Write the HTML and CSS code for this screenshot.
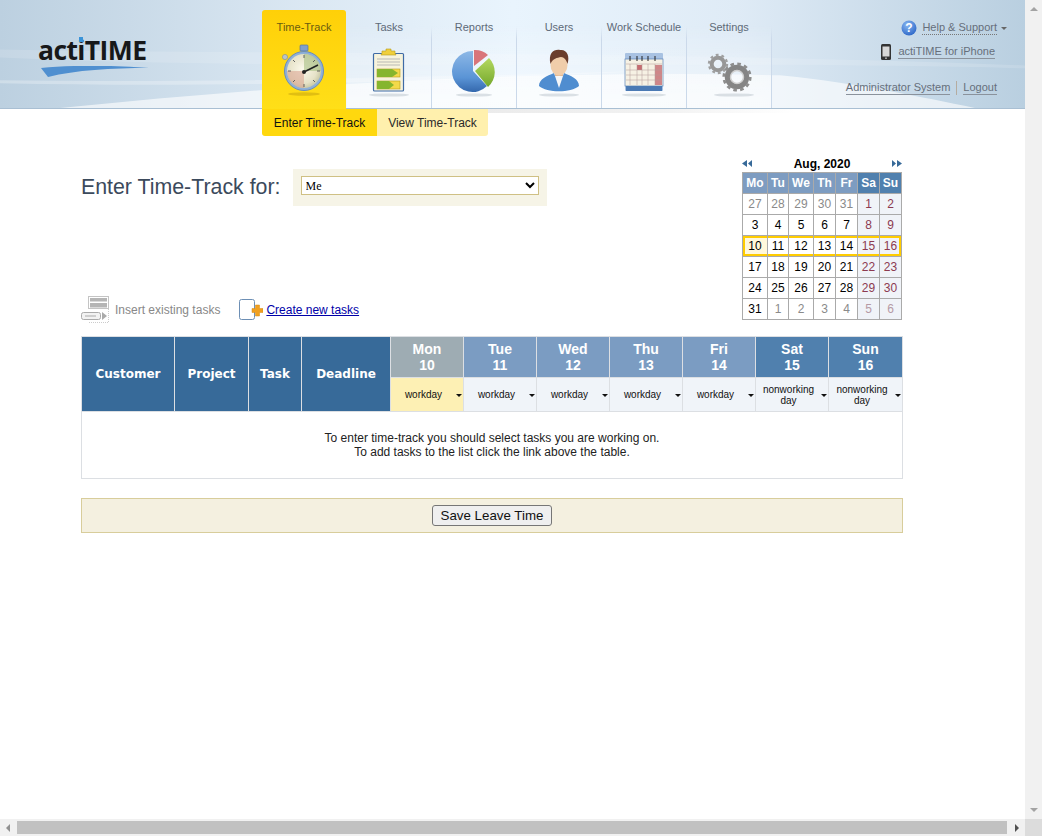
FILE: index.html
```html
<!DOCTYPE html>
<html lang="en">
<head>
<meta charset="utf-8">
<title>actiTIME - Enter Time-Track</title>
<link rel="stylesheet" href="styles.css">
</head>
<body>
<div class="page">
  <header class="header">
    <svg class="header-bg" viewBox="0 0 1025 109" preserveAspectRatio="none" aria-hidden="true">
      <defs>
        <linearGradient id="sky" x1="0" x2="1" y1="0" y2="0">
          <stop offset="0" stop-color="#bcd0e0"/>
          <stop offset=".3" stop-color="#dbe8f3"/>
          <stop offset=".5" stop-color="#e9f4fd"/>
          <stop offset=".72" stop-color="#dfebf6"/>
          <stop offset="1" stop-color="#b9cfe0"/>
        </linearGradient>
      </defs>
      <rect width="1025" height="109" fill="url(#sky)"/>
      <path d="M0 50 C250 55 600 50 1025 66 L1025 69 C700 60 300 72 0 58Z" fill="#fff" opacity=".14"/>
      <path d="M0 81 C200 84 400 78 640 72 C400 84 200 88 0 84Z" fill="#fff" opacity=".28"/>
      <path d="M60 109 C300 85 520 70 780 76 C860 84 920 98 975 109Z" fill="#fff" opacity=".62"/>
    </svg>
    <div class="logo">
      <span class="logo-text">act<span class="logo-i">i</span>TIME</span>
      <svg class="logo-swoosh" viewBox="0 0 108 12" aria-hidden="true"><path d="M0 2 C30 -1 70 -1 108 2 C70 2 35 4 7 11Z" fill="#4f8fd0"/></svg>
    </div>
    <nav class="nav">
      <div class="tab tab-active">
        <span class="tab-label">Time-Track</span>
        <svg class="tab-icon" viewBox="0 0 56 56" aria-hidden="true">
          <defs><radialGradient id="face" cx=".45" cy=".45" r=".6"><stop offset="0" stop-color="#fbf8ea"/><stop offset=".7" stop-color="#e6e2c8"/><stop offset="1" stop-color="#c4c4a0"/></radialGradient></defs>
          <ellipse cx="28" cy="52" rx="16" ry="1.8" fill="#c9a510" opacity=".55"/>
          <rect x="24" y="3" width="8" height="6" rx="1" fill="#7f9fcb" stroke="#56759f" stroke-width=".7"/>
          <circle cx="9" cy="15" r="2.6" fill="#b9c3cc" stroke="#7f8b96" stroke-width=".6"/>
          <circle cx="28" cy="29" r="19.5" fill="#8fb0d8" stroke="#6b8db8"/>
          <circle cx="28" cy="29" r="17" fill="url(#face)"/>
          <path d="M28 12 A17 17 0 0 1 45 29 L28 29Z" fill="#a8bf85" opacity=".6"/>
          <path d="M28 46 A17 17 0 0 1 11 29 L28 29Z" fill="#d9a08e" opacity=".55"/>
          <path d="M28 13v3M28 42v3M12 29h3M41 29h3M17 18l2 2M39 18l-2 2M17 40l2-2M39 40l-2-2" stroke="#555" stroke-width=".9"/>
          <path d="M28 30 L42 23" stroke="#222" stroke-width="1.6"/>
          <circle cx="28" cy="30" r="2" fill="#222"/>
        </svg>
      </div>
      <div class="tab">
        <span class="tab-label">Tasks</span>
        <svg class="tab-icon" viewBox="0 0 56 56" aria-hidden="true">
          <ellipse cx="28" cy="53" rx="20" ry="1.6" fill="#b9c3cc" opacity=".5"/>
          <rect x="12.5" y="11.5" width="30" height="37.5" rx="1" fill="#f7f3dc" stroke="#3f6ba6" stroke-width="1.2"/>
          <path d="M21 11 V9 H25 V7 H30 V9 H34 V11 L35 13 H20Z" fill="#f0cf3c" stroke="#b79a1c" stroke-width=".6"/>
          <path d="M16 17h23M16 20h23M16 23h23" stroke="#aaa" stroke-width=".8"/>
          <rect x="16" y="27" width="23" height="8" fill="#f3d94a" stroke="#b79a1c" stroke-width=".6"/>
          <path d="M16 27 H31 L37 31 L31 35 H16Z" fill="#86b52e"/>
          <rect x="16" y="39" width="23" height="8" fill="#f3d94a" stroke="#b79a1c" stroke-width=".6"/>
          <path d="M16 39 H28 L33 43 L28 47 H16Z" fill="#86b52e"/>
        </svg>
      </div>
      <div class="tab">
        <span class="tab-label">Reports</span>
        <svg class="tab-icon" viewBox="0 0 56 56" aria-hidden="true">
          <defs>
            <linearGradient id="pieblue" x1="0" x2="0" y1="0" y2="1"><stop offset="0" stop-color="#8db8e6"/><stop offset=".65" stop-color="#5a94d6"/><stop offset="1" stop-color="#3468ad"/></linearGradient>
            <linearGradient id="piegreen" x1="0" x2="0" y1="0" y2="1"><stop offset="0" stop-color="#b4d860"/><stop offset="1" stop-color="#74a82c"/></linearGradient>
          </defs>
          <ellipse cx="28" cy="53" rx="18" ry="1.6" fill="#b9c3cc" opacity=".5"/>
          <path d="M27 29 V9 A20.5 20.5 0 1 0 41 44 Z" fill="url(#pieblue)"/>
          <path d="M28 24 V8 A19 19 0 0 1 42 13 Z" fill="#d9757a"/>
          <path d="M29 29 L43 16 A20 20 0 0 1 42 45 Z" fill="url(#piegreen)"/>
        </svg>
      </div>
      <div class="tab">
        <span class="tab-label">Users</span>
        <svg class="tab-icon" viewBox="0 0 56 56" aria-hidden="true">
          <ellipse cx="28" cy="53" rx="20" ry="1.6" fill="#b9c3cc" opacity=".5"/>
          <path d="M8 44 C8 37 16 34 23 31 L28 38 L33 31 C40 34 48 37 48 44 C40 51 16 51 8 44Z" fill="#4f8dd0"/>
          <path d="M23 31 L28 46 L33 31 L28 35Z" fill="#f4f6f8"/>
          <rect x="24" y="26" width="8" height="8" fill="#e0b896"/>
          <ellipse cx="28" cy="23" rx="8.5" ry="10.5" fill="#f0cdaa"/>
          <path d="M19.5 22 C17 11 23 7 29 8 C36 7 39 14 36.5 22 C35.5 18 33 15 30 15 C26 16 22 16 19.5 22Z" fill="#6a3d2c"/>
        </svg>
      </div>
      <div class="tab">
        <span class="tab-label">Work Schedule</span>
        <svg class="tab-icon" viewBox="0 0 56 56" aria-hidden="true">
          <ellipse cx="28" cy="53" rx="22" ry="1.6" fill="#b9c3cc" opacity=".5"/>
          <rect x="9" y="11" width="38" height="38" rx="1" fill="#a8c2e2"/>
          <rect x="9" y="17" width="38" height="27" fill="#f6f1e4" stroke="#5b83b8" stroke-width=".7"/>
          <rect x="10" y="44" width="36" height="5" fill="#4b7ab4"/>
          <rect x="21" y="23" width="5" height="5" fill="#c56c70"/>
          <rect x="39" y="23" width="7" height="20" fill="#c56c70" opacity=".8"/>
          <path d="M14 22v21M21 22v21M26 22v21M32 22v21M39 22v21M10 22h36M10 28h36M10 33h36M10 38h36" stroke="#b09a9a" stroke-width=".5"/>
          <path d="M14 14v5M21 14v5M26 14v5M32 14v5M39 14v5" stroke="#222" stroke-width="1"/>
        </svg>
      </div>
      <div class="tab">
        <span class="tab-label">Settings</span>
        <svg class="tab-icon" viewBox="0 0 56 56" aria-hidden="true">
          <ellipse cx="33" cy="53" rx="20" ry="1.6" fill="#b9c3cc" opacity=".5"/>
          <circle cx="17" cy="22" r="6.3" fill="none" stroke="#979797" stroke-width="4"/>
          <circle cx="17" cy="22" r="9" fill="none" stroke="#a0a0a0" stroke-width="2.4" stroke-dasharray="2.8 2.9"/>
          <circle cx="36" cy="35" r="9.5" fill="none" stroke="#858585" stroke-width="5.5"/>
          <circle cx="36" cy="35" r="13.2" fill="none" stroke="#8e8e8e" stroke-width="2.8" stroke-dasharray="3.6 3.3"/>
          <circle cx="36" cy="35" r="6.5" fill="none" stroke="#cfcfcf" stroke-width="1.4"/>
        </svg>
      </div>
    </nav>
    <div class="links">
      <div class="link-row link-help">
        <svg class="help-icon" viewBox="0 0 16 16" aria-hidden="true">
          <defs><radialGradient id="hb" cx=".4" cy=".3" r=".8"><stop offset="0" stop-color="#8ab8f2"/><stop offset="1" stop-color="#2560c4"/></radialGradient></defs>
          <circle cx="8" cy="8" r="7.5" fill="url(#hb)"/>
          <text x="8" y="12" class="help-q">?</text>
        </svg>
        <span class="link-dotted">Help &amp; Support</span>
        <span class="caret-small"></span>
      </div>
      <div class="link-row link-phone">
        <svg class="phone-icon" viewBox="0 0 10 16" aria-hidden="true">
          <rect width="10" height="16" rx="1.5" fill="#333"/>
          <rect x="1.5" y="2.5" width="7" height="10" fill="#d8d8d8"/>
          <circle cx="5" cy="14.2" r=".9" fill="#bbb"/>
        </svg>
        <span class="link-solid">actiTIME for iPhone</span>
      </div>
      <div class="link-row link-user">
        <span class="link-solid">Administrator System</span>
        <span class="link-sep"></span>
        <span class="link-solid">Logout</span>
      </div>
    </div>
    <div class="subnav">
      <span class="subnav-item subnav-active">Enter Time-Track</span>
      <span class="subnav-item">View Time-Track</span>
    </div>
    <div class="nav-shadow"></div>
  </header>

  <main class="main">
    <div class="top">
      <div class="top-left">
        <div class="for-row">
          <h1 class="title">Enter Time-Track for:</h1>
          <div class="for-box">
            <select class="for-select"><option>Me</option></select>
          </div>
        </div>
        <div class="tools">
          <span class="tool tool-off">
            <svg class="tool-icon" viewBox="0 0 28 27" aria-hidden="true">
              <path d="M27.5 13 V26.5 H8" fill="none" stroke="#ccc" stroke-dasharray="1 1"/>
              <rect x="7.5" y="0.5" width="20" height="12" fill="#fff" stroke="#c4c4c4"/>
              <rect x="9" y="2" width="17" height="3.5" fill="#b5b5b5"/>
              <rect x="9" y="7" width="17" height="4.5" fill="#b5b5b5"/>
              <rect x="0.5" y="16.5" width="19" height="7" rx="2" fill="#f2f2f2" stroke="#aaa"/>
              <path d="M4 20h11" stroke="#aaa"/>
              <path d="M21 16 L26 20 L21 24Z" fill="#aaa"/>
            </svg>
            Insert existing tasks
          </span>
          <span class="tool">
            <svg class="tool-icon-new" viewBox="0 0 24 21" aria-hidden="true">
              <rect x="0.5" y="0.5" width="15" height="20" rx="2" fill="#fff" stroke="#6d8fb5"/>
              <path d="M16.5 6 h4 v3.5 h3.5 v4 h-3.5 v3.5 h-4 v-3.5 h-3.5 v-4 h3.5Z" fill="#f0a020" stroke="#d68a10" stroke-width=".5"/>
            </svg>
            <a class="tool-link" href="#">Create new tasks</a>
          </span>
        </div>
      </div>
      <div class="calendar">
        <div class="cal-head">
          <span class="cal-arrows">
            <svg class="cal-arrow" viewBox="0 0 10 7" aria-hidden="true"><path d="M5 0 L0 3.5 L5 7Z M10 0 L6 3.5 L10 7Z" fill="#376a99"/></svg>
          </span>
          <span class="cal-month">Aug, 2020</span>
          <span class="cal-arrows">
            <svg class="cal-arrow" viewBox="0 0 10 7" aria-hidden="true"><path d="M0 0 L4 3.5 L0 7Z M5 0 L10 3.5 L5 7Z" fill="#376a99"/></svg>
          </span>
        </div>
        <table class="cal-table">
          <colgroup><col class="c-a"><col class="c-b"><col class="c-a"><col class="c-c"><col class="c-c"><col class="c-c"><col class="c-c"></colgroup>
          <thead>
            <tr><th>Mo</th><th>Tu</th><th>We</th><th>Th</th><th>Fr</th><th class="we">Sa</th><th class="we">Su</th></tr>
          </thead>
          <tbody>
            <tr><td class="out">27</td><td class="out">28</td><td class="out">29</td><td class="out">30</td><td class="out">31</td><td class="wk">1</td><td class="wk">2</td></tr>
            <tr><td>3</td><td>4</td><td>5</td><td>6</td><td>7</td><td class="wk">8</td><td class="wk">9</td></tr>
            <tr class="cur"><td class="today">10</td><td>11</td><td>12</td><td>13</td><td>14</td><td class="wk">15</td><td class="wk">16</td></tr>
            <tr><td>17</td><td>18</td><td>19</td><td>20</td><td>21</td><td class="wk">22</td><td class="wk">23</td></tr>
            <tr><td>24</td><td>25</td><td>26</td><td>27</td><td>28</td><td class="wk">29</td><td class="wk">30</td></tr>
            <tr><td>31</td><td class="out">1</td><td class="out">2</td><td class="out">3</td><td class="out">4</td><td class="wk wk-out">5</td><td class="wk wk-out">6</td></tr>
          </tbody>
        </table>
      </div>
    </div>

    <table class="grid">
      <colgroup><col class="g-cust"><col class="g-proj"><col class="g-task"><col class="g-dead"><col class="g-day"><col class="g-day"><col class="g-day"><col class="g-day"><col class="g-day"><col class="g-day"><col class="g-last"></colgroup>
      <thead>
        <tr class="g-r1">
          <th class="g-main" rowspan="2">Customer</th>
          <th class="g-main" rowspan="2">Project</th>
          <th class="g-main" rowspan="2">Task</th>
          <th class="g-main" rowspan="2">Deadline</th>
          <th class="g-cur">Mon<br>10</th>
          <th class="g-wd">Tue<br>11</th>
          <th class="g-wd">Wed<br>12</th>
          <th class="g-wd">Thu<br>13</th>
          <th class="g-wd">Fri<br>14</th>
          <th class="g-we">Sat<br>15</th>
          <th class="g-we">Sun<br>16</th>
        </tr>
        <tr class="g-r2">
          <td class="g-type g-type-cur"><span class="g-type-in"><span class="g-type-txt">workday</span><span class="caret"></span></span></td>
          <td class="g-type"><span class="g-type-in"><span class="g-type-txt">workday</span><span class="caret"></span></span></td>
          <td class="g-type"><span class="g-type-in"><span class="g-type-txt">workday</span><span class="caret"></span></span></td>
          <td class="g-type"><span class="g-type-in"><span class="g-type-txt">workday</span><span class="caret"></span></span></td>
          <td class="g-type"><span class="g-type-in"><span class="g-type-txt">workday</span><span class="caret"></span></span></td>
          <td class="g-type"><span class="g-type-in"><span class="g-type-txt">nonworking day</span><span class="caret"></span></span></td>
          <td class="g-type"><span class="g-type-in"><span class="g-type-txt">nonworking day</span><span class="caret"></span></span></td>
        </tr>
      </thead>
      <tbody>
        <tr><td class="g-msg" colspan="11">To enter time-track you should select tasks you are working on.<br>To add tasks to the list click the link above the table.</td></tr>
      </tbody>
    </table>

    <div class="save-bar"><button class="save-btn" type="button">Save Leave Time</button></div>
  </main>
</div>

<div class="sb-v" aria-hidden="true"><span class="sb-up"></span><span class="sb-down"></span></div>
<div class="sb-h" aria-hidden="true"><span class="sb-left"></span><span class="sb-thumb"></span><span class="sb-right"></span></div>
<div class="sb-corner" aria-hidden="true"></div>
</body>
</html>
```
FILE: styles.css
```css
html, body { margin: 0; padding: 0; height: 100%; overflow: hidden; background: #fff; }
body { font-family: "Liberation Sans", Arial, sans-serif; font-size: 12px; color: #000; }
.page { width: 1025px; height: 819px; overflow: hidden; }

.header { position: relative; height: 109px; display: flex; box-sizing: border-box; border-bottom: 1px solid #a9bfd3; }
.header-bg { position: absolute; left: 0; top: 0; width: 100%; height: 108px; }
.logo { position: relative; width: 262px; flex: none; box-sizing: border-box; padding: 33px 0 0 38px; }
.logo-text { display: block; font-family: "Open Sans", sans-serif; font-weight: 700; font-size: 26.5px; line-height: 34px; color: #17181a; letter-spacing: -0.6px; }
.logo-i { position: relative; color: #17181a; }
.logo-i::after { content: ""; position: absolute; left: 2px; top: 5px; width: 4px; height: 5px; background: #3a93d8; }
.logo-swoosh { display: block; width: 108px; height: 12px; margin: -1px 0 0 3px; }

.nav { position: relative; display: flex; align-items: stretch; }
.tab { width: 85px; box-sizing: border-box; padding-top: 10px; display: flex; flex-direction: column; align-items: center; margin-top: 10px; border-right: 1px solid; border-image: linear-gradient(rgba(203, 217, 234, 0) 18%, #cbd9ea 30%) 1; background: linear-gradient(rgba(255, 255, 255, 0) 15%, rgba(255, 255, 255, .5)); }
.tab-active { width: 84px; margin-right: 1px; margin-bottom: -1px; background: linear-gradient(#ffd008, #ffdf18); border: 0; border-radius: 3px 3px 0 0; }
.tab-label { font-size: 11px; line-height: 14px; color: #5e6a78; white-space: nowrap; }
.tab-active .tab-label { color: #6b5c10; }
.tab-icon { width: 56px; height: 56px; margin-top: 8px; }

.links { position: relative; flex: 1; display: flex; flex-direction: column; align-items: flex-end; padding: 19px 18px 0 0; color: #666f7b; font-size: 11px; }
.link-row { display: flex; align-items: center; white-space: nowrap; }
.link-help { height: 18px; }
.link-phone { height: 18px; margin-top: 6px; padding-right: 12px; }
.link-user { height: 16px; margin-top: 19px; padding-right: 10px; }
.help-icon { width: 16px; height: 16px; margin-right: 5px; }
.help-q { font-family: "Liberation Sans", sans-serif; font-weight: 700; font-size: 12px; fill: #fff; text-anchor: middle; }
.phone-icon { width: 10px; height: 16px; margin-right: 7px; }
.link-dotted { border-bottom: 1px dotted #777; line-height: 13px; }
.link-solid { border-bottom: 1px solid #8a929c; line-height: 13px; }
.caret-small { width: 0; height: 0; margin-left: 4px; border: 3px solid transparent; border-top-color: #666; border-bottom: 0; }
.link-sep { width: 1px; height: 14px; margin: 0 6px; background: #b5aca0; }

.subnav { position: absolute; left: 262px; top: 109px; display: flex; height: 27px; border-radius: 0 0 3px 3px; overflow: hidden; z-index: 2; }
.subnav-item { display: flex; align-items: center; justify-content: center; width: 111px; background: #fff0ad; color: #2a2a2a; }
.subnav-active { width: 115px; background: #ffd80e; color: #111; }
.nav-shadow { position: absolute; left: 346px; top: 109px; width: 450px; height: 4px; background: linear-gradient(90deg, #e6e6e6, #f2f2f2 70%, #fff); }

.main { width: 822px; margin-left: 81px; }
.top { display: flex; justify-content: space-between; height: 214px; box-sizing: border-box; padding: 46px 0 0; }
.top-left { display: flex; flex-direction: column; justify-content: space-between; padding: 14px 0 0; height: 168px; box-sizing: border-box; }
.for-row { display: flex; align-items: center; }
.title { margin: 0 12px 0 0; font-size: 21.33px; font-weight: 400; line-height: 37px; color: #3b4a5c; }
.for-box { width: 254px; height: 37px; box-sizing: border-box; padding: 7px 8px; background: #f6f4e7; }
.for-select { display: block; width: 238px; height: 19px; padding: 0; box-sizing: border-box; font-family: "Liberation Serif", serif; font-size: 12px; color: #000; background: #fff; border: 1px solid #cfc084; border-radius: 0; }

.tools { display: flex; align-items: center; height: 27px; color: #888; }
.tool { display: flex; align-items: center; }
.tool-off { margin-right: 19px; }
.tool-icon { width: 28px; height: 27px; margin-right: 6px; }
.tool-icon-new { width: 24px; height: 21px; margin-right: 3px; }
.tool-link { color: #0000a8; }

.calendar { width: 160px; margin-right: 1px; }
.cal-head { display: flex; justify-content: space-between; align-items: center; height: 17px; }
.cal-arrow { display: block; width: 10px; height: 7px; }
.cal-month { font-weight: 700; font-size: 12px; }
.cal-table { border-collapse: collapse; table-layout: fixed; width: 160px; }
.c-a { width: 25px; }
.c-b { width: 21px; }
.c-c { width: 22px; }
.cal-table th, .cal-table td { height: 20px; padding: 0; border: 1px solid #aaa; text-align: center; font-size: 12px; line-height: 14px; }
.cal-table th { background: #7d9cc1; color: #fff; font-weight: 700; }
.cal-table th.we { background: #5080ae; }
.cal-table td.out { color: #8a8a8a; }
.cal-table td.wk { background: #f0f3f8; color: #8c3a50; }
.cal-table td.wk-out { color: #b59aa5; }
.cal-table td.today { background: #fff8dc; }
.cur td { box-shadow: inset 0 2px #ffcc00, inset 0 -2px #ffcc00; }
.cur td:first-child { box-shadow: inset 0 2px #ffcc00, inset 0 -2px #ffcc00, inset 2px 0 #ffcc00; }
.cur td:last-child { box-shadow: inset 0 2px #ffcc00, inset 0 -2px #ffcc00, inset -2px 0 #ffcc00; }

.grid { width: 822px; border-collapse: collapse; table-layout: fixed; margin-top: 13px; }
.g-cust { width: 93px; }
.g-proj { width: 74px; }
.g-task { width: 53px; }
.g-dead { width: 89px; }
.g-day { width: 73px; }
.g-last { width: 74px; }
.grid th, .grid td { border: 1px solid #dcdfe3; padding: 0; text-align: center; }
.g-r1 { height: 41px; }
.g-r2 { height: 34px; }
.grid .g-main { background: #376a99; color: #fff; font-family: "DejaVu Sans", sans-serif; font-size: 12px; font-weight: 700; }
.grid .g-cur, .grid .g-wd, .grid .g-we { color: #fff; font-size: 14px; font-weight: 700; line-height: 16px; }
.grid .g-cur { background: #9eacb3; }
.grid .g-wd { background: #7b9cc2; }
.grid .g-we { background: #5080ae; }
.grid .g-type { background: #f0f4f9; font-size: 10px; line-height: 11px; color: #111; }
.grid .g-type-cur { background: #fdf0b4; }
.g-type-in { display: flex; align-items: center; padding: 0 1px 0 0; }
.g-type-txt { flex: 1; text-align: center; }
.caret { width: 0; height: 0; flex: none; margin-top: 1px; border: 3px solid transparent; border-top-color: #111; border-bottom: 0; }
.grid .g-msg { height: 66px; font-size: 12px; line-height: 14px; color: #222; background: #fff; }

.save-bar { height: 35px; box-sizing: border-box; margin-top: 19px; display: flex; align-items: center; justify-content: center; background: #f4f0e0; border: 1px solid #d8cd9b; }
.save-btn { width: 120px; height: 21px; padding: 0; font-family: "Liberation Sans", sans-serif; font-size: 13.33px; color: #111; background: #efefef; border: 1px solid #767676; border-radius: 3px; }

.sb-v { position: fixed; right: 0; top: 0; width: 17px; height: 819px; background: #f1f1f1; }
.sb-up, .sb-down { position: absolute; left: 5px; width: 0; height: 0; border: 4px solid transparent; }
.sb-up { top: 7px; border-top: 0; border-bottom-color: #a3a3a3; }
.sb-down { bottom: 7px; border-bottom: 0; border-top-color: #a3a3a3; }
.sb-h { position: fixed; left: 0; bottom: 0; width: 1025px; height: 17px; display: flex; align-items: center; background: #f1f1f1; }
.sb-thumb { width: 990px; height: 13px; background: #c1c1c1; }
.sb-left, .sb-right { width: 0; height: 0; flex: none; border: 4px solid transparent; }
.sb-left { margin: 0 7px 0 6px; border-left: 0; border-right-color: #909090; }
.sb-right { margin-left: 8px; border-right: 0; border-left-color: #505050; }
.sb-corner { position: fixed; right: 0; bottom: 0; width: 17px; height: 17px; background: #dcdcdc; }
```
